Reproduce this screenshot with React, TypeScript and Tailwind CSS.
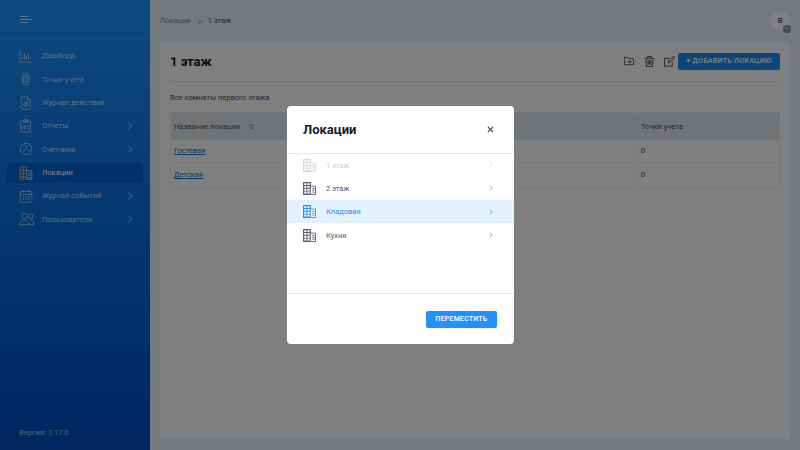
import React from "react";

const Chevron = ({ className = "" }: { className?: string }) => (
  <svg viewBox="0 0 8 12" className={className} fill="none" stroke="currentColor" strokeWidth="1.3">
    <path d="M2 1.5 6.5 6 2 10.5" />
  </svg>
);

const Building = ({ className = "" }: { className?: string }) => (
  <svg viewBox="0 0 14 14" className={className}>
    <path d="M0 0h8.500v14H0z" fill="currentColor" />
    <path d="M1.300 2.300h2.500M4.700 2.300h2.500M1.300 5.300h2.500M4.700 5.300h2.500M1.300 8.300h2.500M4.700 8.300h2.500M1.300 11.300h2.500M4.700 11.300h2.500" stroke="#fff" strokeWidth="2" />
    <path d="M8.500 4.500h5v9h-5" fill="#fff" stroke="currentColor" />
    <path d="M10 7h2.500M10 9h2.500M10 11h2.500" stroke="currentColor" strokeWidth="1" />
  </svg>
);

const icons: Record<string, React.ReactNode> = {
  chart: (
    <>
      <path d="M1 1v15h14" />
      <path d="M4 13V9M6.500 13V6M9 13V8M11.500 13V5" />
    </>
  ),
  watch: (
    <>
      <circle cx="8" cy="8.500" r="4.800" />
      <circle cx="8" cy="8.500" r="3" />
      <path d="M5 4.500 5.500 1.500h5l.5 3M5 12.500l.5 3h5l.5-3M6.800 8.500h2.400" />
    </>
  ),
  doc: (
    <>
      <path d="M2.500 1h7.500l3.500 3.500V16H2.500z" />
      <path d="M10 1v3.500h3.500" />
      <circle cx="8" cy="10" r="2.600" />
      <circle cx="8" cy="10" r=".8" />
    </>
  ),
  report: (
    <>
      <rect x="2" y="2.500" width="12" height="13.500" rx="1" />
      <path d="M5.500 1h5v3h-5z" />
      <path d="M4.500 8v4M6.500 8h2v2h-2v2h2M10 8h2v4h-2" strokeWidth=".9" />
    </>
  ),
  meter: (
    <>
      <circle cx="8.500" cy="8.500" r="7" />
      <path d="m4 11.500 4.500-3 2-4.500M11 12a4.500 4.500 0 0 0 1.500-3M5.500 4.600A4.500 4.500 0 0 1 8 4" />
    </>
  ),
  building: (
    <>
      <path d="M1 16V1h8v15z" fill="#3b5f89" stroke="#b5c4d6" />
      <path d="M9 6h6.500v10H9" />
      <path d="M5 1v15M1 5h8M1 9h8M1 13h8" stroke="#b5c4d6" />
      <path d="M10.500 9h3.500M10.500 11.500h3.500M10.500 14h3.500" />
    </>
  ),
  calendar: (
    <>
      <rect x="1.500" y="3" width="14" height="13" rx="1.500" />
      <path d="M1.500 6.500h14M5 1v3.500M12 1v3.500" />
      <path d="M4.500 9.500h1.500M7.800 9.500h1.500M11 9.500h1.500M4.500 12.500h1.500M7.800 12.500h1.500M11 12.500h1.500" strokeWidth="1.400" />
    </>
  ),
  users: (
    <>
      <circle cx="6.500" cy="5" r="3.500" />
      <circle cx="14" cy="5.500" r="2.800" />
      <path d="M.5 15.500c0-3.500 2.500-5.500 6-5.500s6 2 6 5.500zM14 10c2.500 0 4 2 4 5.500h-5" />
    </>
  ),
};

const menu = [
  { label: "Дашборд", icon: "chart" },
  { label: "Точки учета", icon: "watch" },
  { label: "Журнал действий", icon: "doc" },
  { label: "Отчеты", icon: "report", arrow: true },
  { label: "Счетчики", icon: "meter", arrow: true },
  { label: "Локации", icon: "building", active: true },
  { label: "Журнал событий", icon: "calendar", arrow: true },
  { label: "Пользователи", icon: "users", arrow: true },
];

const rows = [
  { label: "1 этаж", text: "text-[#c8cbd0]", icon: "text-[#d5d8dc]", chevron: "text-[#d0d3d8]" },
  { label: "2 этаж", text: "text-[#4f5a6c]", icon: "text-[#5a6170]", chevron: "text-[#6b7280]" },
  { label: "Кладовая", text: "text-[#2490ff]", icon: "text-[#2490ff]", chevron: "text-[#2490ff]", bg: "bg-[#e3f3fd]" },
  { label: "Кухня", text: "text-[#4f5a6c]", icon: "text-[#5a6170]", chevron: "text-[#6b7280]" },
];

export default function App() {
  return (
    <div className="relative flex h-[450px] w-[800px] overflow-hidden bg-[#e7f2f9] font-['Roboto',sans-serif]">
      <aside className="flex w-[150px] shrink-0 flex-col bg-gradient-to-b from-[#1c94ff] to-[#004cc0] text-[#c4dcf4]">
        <div className="flex h-[40px] items-center border-b border-white/10 pl-[20px]">
          <svg viewBox="0 0 12 8" className="h-[8px] w-[12px]" fill="none" stroke="currentColor" strokeWidth="1">
            <path d="M0 .5h8M0 3.500h12M0 6.500h8" />
          </svg>
        </div>
        <nav className="mt-[6px] flex flex-col gap-[3.330px] px-[7px]">
          {menu.map((m) => (
            <div
              key={m.label}
              className={`flex h-[20px] items-center rounded-[3px] pl-[12px] pr-[10px] text-[7.500px] ${m.active ? "bg-[#0063d0] text-white" : ""}`}
            >
              <span className="flex w-[23px] shrink-0">
                <svg viewBox="0 0 18 17" className="h-[14px] w-[15px]" fill="none" stroke="currentColor" strokeWidth=".9">
                  {icons[m.icon]}
                </svg>
              </span>
              <span className="flex-1">{m.label}</span>
              {m.arrow && <Chevron className="h-[10px] w-[6px]" />}
            </div>
          ))}
        </nav>
        <div className="mt-auto pb-[12px] pl-[19px] text-[7.500px] text-[#a9c8ec]">Версия: 1.17.0</div>
      </aside>

      <main className="flex min-w-0 flex-1 flex-col pl-[10px] pr-[10px]">
        <header className="flex h-[42px] shrink-0 items-center justify-between">
          <div className="flex items-center gap-[6px] text-[7.500px]">
            <span className="text-[#7c8794]">Локации</span>
            <Chevron className="h-[7px] w-[5px] text-[#7c8794]" />
            <span className="text-[#4a5460]">1 этаж</span>
          </div>
          <div className="relative flex h-[20px] w-[20px] items-center justify-center rounded-full bg-white text-[7.500px] font-medium text-[#1f4aa0]">
            В
            <span className="absolute -bottom-[1.500px] -right-[1px] flex h-[8px] w-[8px] items-center justify-center rounded-full bg-[#8d97a6]">
              <svg viewBox="0 0 6 6" className="h-[5px] w-[5px]" fill="none" stroke="#fff" strokeWidth="1">
                <path d="m1 2 2 2 2-2" />
              </svg>
            </span>
          </div>
        </header>

        <section className="mb-[11px] flex-1 rounded-[3px] bg-white px-[10px]">
          <div className="flex h-[40px] items-center justify-between border-b border-[#e2e6ea]">
            <h1 className="text-[13px] font-bold leading-none text-[#15191e]">1 этаж</h1>
            <div className="-mt-[1px] flex items-center">
              <svg viewBox="0 0 12 12" className="mr-[10px] h-[10px] w-[10px] text-[#39414c]" fill="none" stroke="currentColor" strokeWidth="1">
                <path d="M.5 10.500v-9h4l1 1.500h6v7.500zM3.500 7h5M6.500 5l2 2-2 2" />
              </svg>
              <svg viewBox="0 0 12 12" className="mr-[9px] h-[11px] w-[11px] text-[#39414c]" fill="none" stroke="currentColor" strokeWidth="1">
                <path d="M1 2.500h10M4 2.500v-2h4v2M2 2.500l.7 9h6.600l.7-9M4.500 4.500v5M6 4.500v5M7.500 4.500v5" />
              </svg>
              <svg viewBox="0 0 12 12" className="mr-[3px] h-[11px] w-[11px] text-[#39414c]" fill="none" stroke="currentColor" strokeWidth="1">
                <path d="M9 6.500v4.500H.5V2.500H6M4.500 7.500 5 5l5.500-4.500 1 1.200L6.500 6.500z" />
              </svg>
              <button className="flex h-[17px] w-[102px] items-center justify-center rounded-[2px] bg-[#1a8cf5] text-[7px] font-medium tracking-[0.3px] text-white">
                + ДОБАВИТЬ ЛОКАЦИЮ
              </button>
            </div>
          </div>
          <p className="mb-[8px] mt-[10px] text-[7.500px] leading-[12px] text-[#4a5460]">Все комнаты первого этажа</p>
          <div className="grid grid-cols-[467px_1fr] border border-[#eef0f1] text-[7.500px] text-[#4a5460]">
            <div className="flex h-[27px] items-center gap-[9px] border-r border-[#d9dfe3] bg-[#e2e9ef] pl-[3px]">
              Название локации
              <svg viewBox="0 0 6 10" className="h-[7px] w-[5px]" fill="none" stroke="currentColor" strokeWidth="1">
                <path d="m1 4 2-2.500L5 4M1 6l2 2.500L5 6" />
              </svg>
            </div>
            <div className="flex h-[27px] items-center bg-[#e2e9ef] pl-[3px]">Точки учета</div>
            <div className="flex h-[23px] items-center border-b border-r border-[#eef0f1] pl-[3px] text-[#1a6bc4] underline">Гостевая</div>
            <div className="flex h-[23px] items-center border-b border-[#eef0f1] pl-[3px]">0</div>
            <div className="flex h-[24px] items-center border-r border-[#eef0f1] pb-[1px] pl-[3px] text-[#1a6bc4] underline">Детская</div>
            <div className="flex h-[24px] items-center pb-[1px] pl-[3px]">0</div>
          </div>
        </section>
      </main>

      <div className="absolute inset-0 flex items-start justify-center bg-black/50 pt-[106px]">
        <div className="ml-[1px] flex h-[238px] w-[227px] flex-col rounded-[4px] bg-white">
          <div className="flex h-[47.500px] shrink-0 items-center justify-between border-b border-[#e3e8ee] pl-[16px] pr-[20px]">
            <h2 className="text-[13px] font-bold leading-none text-[#15191e]">Локации</h2>
            <svg viewBox="0 0 8 8" className="h-[7px] w-[7px] text-[#39414c]" fill="none" stroke="currentColor" strokeWidth="1.300">
              <path d="m1 1 6 6M7 1 1 7" />
            </svg>
          </div>
          <div className="flex h-[140.500px] shrink-0 flex-col border-b border-[#e5e7eb]">
            {rows.map((r) => (
              <div key={r.label} className={`flex h-[23.330px] shrink-0 items-center pl-[16px] pr-[21px] text-[7.500px] ${r.bg ?? ""}`}>
                <Building className={`mr-[10px] h-[13px] w-[13px] ${r.icon}`} />
                <span className={`flex-1 ${r.text}`}>{r.label}</span>
                <Chevron className={`h-[6px] w-[4px] ${r.chevron}`} />
              </div>
            ))}
          </div>
          <div className="flex flex-1 items-start justify-end pr-[17px] pt-[17px]">
            <button className="flex h-[17px] w-[71px] items-center justify-center rounded-[2px] bg-[#2490ff] text-[7px] font-medium tracking-[0.2px] text-white">
              ПЕРЕМЕСТИТЬ
            </button>
          </div>
        </div>
      </div>
    </div>
  );
}
